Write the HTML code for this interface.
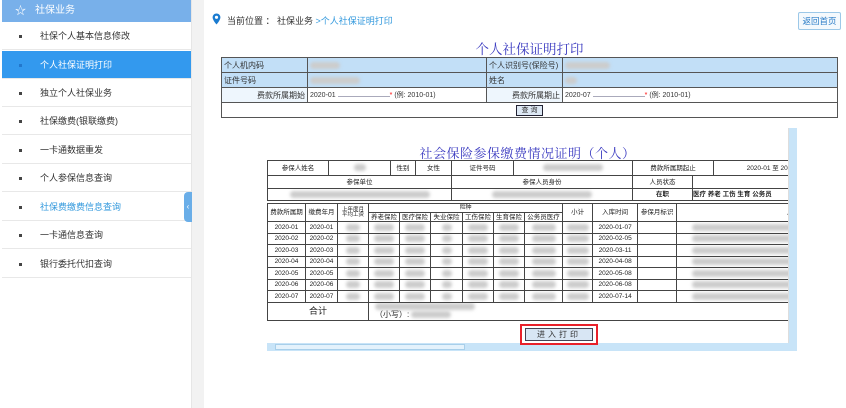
<!DOCTYPE html>
<html><head><meta charset="utf-8"><style>
*{box-sizing:border-box;margin:0;padding:0}
body{width:846px;height:408px;overflow:hidden;background:#fff;font-family:"Liberation Sans","Noto Sans CJK SC",sans-serif;font-size:9px;color:#333;position:relative}
.a{position:absolute}
.side{left:0;top:0;width:192px;height:408px;background:#fff;border-right:1px solid #e6e6e6}
.gap{left:192px;top:0;width:12px;height:408px;background:#f2f2f2}
.hd{left:2px;top:0;width:189px;height:22px;background:#78b0ea;color:#fff;font-size:10px;line-height:22px;padding-left:33px}
.it{left:2px;width:189px;height:28px;border-bottom:1px solid #e8e8e8;line-height:28px;padding-left:38px;font-size:9px;color:#333}
.it:before{content:"";position:absolute;left:17px;top:13px;width:3px;height:3px;background:#444}
.act{background:#3399ee;color:#fff}
.act:before{background:#2277cc}
table{border-collapse:collapse;table-layout:fixed;position:absolute}
td{border:1px solid #555;font-size:8px;white-space:nowrap;overflow:hidden;padding:0 2px}
.bl{display:inline-block;height:7px;background:#ccc;border-radius:4px;filter:blur(1.5px);vertical-align:middle}
.t2 td{font-size:6.5px;line-height:7px;text-align:center;border-color:#444;color:#222;padding:0}
</style></head><body>
<div class="a side"></div><div class="a gap"></div>
<div class="a hd"><span style="position:absolute;left:13px;font-size:11px">☆</span>社保业务</div>
<div class="a it" style="top:22px">社保个人基本信息修改</div>
<div class="a it act" style="top:51px">个人社保证明打印</div>
<div class="a it" style="top:79px">独立个人社保业务</div>
<div class="a it" style="top:107px">社保缴费(银联缴费)</div>
<div class="a it" style="top:136px">一卡通数据重发</div>
<div class="a it" style="top:164px">个人参保信息查询</div>
<div class="a it" style="top:193px;color:#3399dd">社保费缴费信息查询</div>
<div class="a it" style="top:221px">一卡通信息查询</div>
<div class="a it" style="top:250px">银行委托代扣查询</div>
<div class="a" style="left:184px;top:192px;width:8px;height:30px;background:#6aaee8;border-radius:4px 0 0 4px;color:#fff;font-size:8px;line-height:30px;text-align:center">‹</div>

<svg class="a" style="left:212px;top:13px" width="9" height="12" viewBox="0 0 9 12"><path d="M4.5 0.5C2.3 0.5 0.6 2.2 0.6 4.4 0.6 7.2 4.5 11.5 4.5 11.5S8.4 7.2 8.4 4.4C8.4 2.2 6.7 0.5 4.5 0.5Z" fill="#1a7bd0"/><circle cx="4.5" cy="4.3" r="1.6" fill="#fff"/></svg>
<div class="a" style="left:227px;top:14px;font-size:9px;color:#333">当前位置 ： 社保业务 <span style="color:#3399dd">&gt;个人社保证明打印</span></div>
<div class="a" style="left:798px;top:12px;width:43px;height:18px;border:1px solid #9cc8e8;border-radius:2px;background:#f4f9fd;color:#2a7cc7;font-size:8.5px;line-height:16px;text-align:center">返回首页</div>

<div class="a" style="left:221px;width:617px;top:38px;text-align:center;font-size:13.5px;color:#3838c0;font-family:'Noto Serif CJK SC',serif">个人社保证明打印</div>
<table style="left:221px;top:57px;width:617px">
<colgroup><col style="width:86px"><col style="width:179px"><col style="width:76px"><col></colgroup>
<tr style="height:15px;background:#c2dff7"><td>个人机内码</td><td><span class="bl" style="width:30px"></span></td><td>个人识别号(保险号)</td><td><span class="bl" style="width:45px"></span></td></tr>
<tr style="height:15px;background:#c2dff7"><td>证件号码</td><td><span class="bl" style="width:50px"></span></td><td>姓名</td><td><span class="bl" style="width:12px"></span></td></tr>
<tr style="height:15px"><td style="background:#eef6fd;text-align:right">费款所属期始</td><td style="font-size:7px">2020-01 <span style="display:inline-block;width:52px;border-bottom:1px solid #aab"></span><span style="color:red">*</span> (例: 2010-01)</td><td style="background:#eef6fd;text-align:right">费款所属期止</td><td style="font-size:7px">2020-07 <span style="display:inline-block;width:52px;border-bottom:1px solid #aab"></span><span style="color:red">*</span> (例: 2010-01)</td></tr>
<tr style="height:15px"><td colspan="4" style="text-align:center"><span style="display:inline-block;width:27px;height:11px;border:1px solid #223;background:#dde8f4;font-size:7px;line-height:9px;vertical-align:middle">查 询</span></td></tr>
</table>

<div class="a" style="left:267px;width:521px;top:143px;text-align:center;font-size:13px;color:#3838c0;font-family:'Noto Serif CJK SC',serif;letter-spacing:0.5px">社会保险参保缴费情况证明（个人）</div>
<div class="a" style="left:267px;top:160px;width:521px;height:161px;overflow:hidden">
<table class="t2" style="left:0;top:0;width:570px">
<colgroup><col style="width:61px"><col style="width:62px"><col style="width:25px"><col style="width:36px"><col style="width:62px"><col style="width:119px"><col style="width:81px"><col style="width:124px"></colgroup>
<tr style="height:15px"><td>参保人姓名</td><td><span class="bl" style="width:12px"></span></td><td>性别</td><td>女性</td><td>证件号码</td><td><span class="bl" style="width:60px"></span></td><td>费款所属期起止</td><td>2020-01 至 2020-07</td></tr>
</table>
<table class="t2" style="left:0;top:15px;width:570px">
<colgroup><col style="width:184px"><col style="width:181px"><col style="width:60px"><col style="width:145px"></colgroup>
<tr style="height:13px"><td>参保单位</td><td>参保人员身份</td><td>人员状态</td><td style="text-align:right">参保险种</td></tr>
<tr style="height:12px"><td><span class="bl" style="width:140px"></span></td><td><span class="bl" style="width:100px"></span></td><td style="font-weight:bold">在职</td><td style="text-align:left;font-weight:bold">医疗 养老 工伤 生育 公务员</td></tr>
</table>
<table class="t2" style="left:0;top:43px;width:550px">
<colgroup><col style="width:38px"><col style="width:32px"><col style="width:31px"><col style="width:31px"><col style="width:31px"><col style="width:32px"><col style="width:31px"><col style="width:31px"><col style="width:38px"><col style="width:30px"><col style="width:45px"><col style="width:39px"><col style="width:141px"></colgroup>
<tr style="height:9px"><td rowspan="2">费款所属期</td><td rowspan="2">缴费年月</td><td rowspan="2" style="line-height:5px;font-size:5.5px">上年度月<br>平均工资</td><td colspan="6" style="font-size:6px;line-height:6px">险种</td><td rowspan="2">小计</td><td rowspan="2">入库时间</td><td rowspan="2">参保月标识</td><td rowspan="2" style="text-align:right;padding-right:4px">用人单位</td></tr>
<tr style="height:9px"><td>养老保险</td><td>医疗保险</td><td>失业保险</td><td>工伤保险</td><td>生育保险</td><td>公务员医疗</td></tr>
<tr style="height:11.5px"><td>2020-01</td><td>2020-01</td><td><span class="bl" style="width:14px"></span></td><td><span class="bl" style="width:20px"></span></td><td><span class="bl" style="width:20px"></span></td><td><span class="bl" style="width:10px"></span></td><td><span class="bl" style="width:20px"></span></td><td><span class="bl" style="width:20px"></span></td><td><span class="bl" style="width:24px"></span></td><td><span class="bl" style="width:22px"></span></td><td>2020-01-07</td><td></td><td><span class="bl" style="width:110px"></span></td></tr>
<tr style="height:11.5px"><td>2020-02</td><td>2020-02</td><td><span class="bl" style="width:14px"></span></td><td><span class="bl" style="width:20px"></span></td><td><span class="bl" style="width:20px"></span></td><td><span class="bl" style="width:10px"></span></td><td><span class="bl" style="width:20px"></span></td><td><span class="bl" style="width:20px"></span></td><td><span class="bl" style="width:24px"></span></td><td><span class="bl" style="width:22px"></span></td><td>2020-02-05</td><td></td><td><span class="bl" style="width:110px"></span></td></tr>
<tr style="height:11.5px"><td>2020-03</td><td>2020-03</td><td><span class="bl" style="width:14px"></span></td><td><span class="bl" style="width:20px"></span></td><td><span class="bl" style="width:20px"></span></td><td><span class="bl" style="width:10px"></span></td><td><span class="bl" style="width:20px"></span></td><td><span class="bl" style="width:20px"></span></td><td><span class="bl" style="width:24px"></span></td><td><span class="bl" style="width:22px"></span></td><td>2020-03-11</td><td></td><td><span class="bl" style="width:110px"></span></td></tr>
<tr style="height:11.5px"><td>2020-04</td><td>2020-04</td><td><span class="bl" style="width:14px"></span></td><td><span class="bl" style="width:20px"></span></td><td><span class="bl" style="width:20px"></span></td><td><span class="bl" style="width:10px"></span></td><td><span class="bl" style="width:20px"></span></td><td><span class="bl" style="width:20px"></span></td><td><span class="bl" style="width:24px"></span></td><td><span class="bl" style="width:22px"></span></td><td>2020-04-08</td><td></td><td><span class="bl" style="width:110px"></span></td></tr>
<tr style="height:11.5px"><td>2020-05</td><td>2020-05</td><td><span class="bl" style="width:14px"></span></td><td><span class="bl" style="width:20px"></span></td><td><span class="bl" style="width:20px"></span></td><td><span class="bl" style="width:10px"></span></td><td><span class="bl" style="width:20px"></span></td><td><span class="bl" style="width:20px"></span></td><td><span class="bl" style="width:24px"></span></td><td><span class="bl" style="width:22px"></span></td><td>2020-05-08</td><td></td><td><span class="bl" style="width:110px"></span></td></tr>
<tr style="height:11.5px"><td>2020-06</td><td>2020-06</td><td><span class="bl" style="width:14px"></span></td><td><span class="bl" style="width:20px"></span></td><td><span class="bl" style="width:20px"></span></td><td><span class="bl" style="width:10px"></span></td><td><span class="bl" style="width:20px"></span></td><td><span class="bl" style="width:20px"></span></td><td><span class="bl" style="width:24px"></span></td><td><span class="bl" style="width:22px"></span></td><td>2020-06-08</td><td></td><td><span class="bl" style="width:110px"></span></td></tr>
<tr style="height:11.5px"><td>2020-07</td><td>2020-07</td><td><span class="bl" style="width:14px"></span></td><td><span class="bl" style="width:20px"></span></td><td><span class="bl" style="width:20px"></span></td><td><span class="bl" style="width:10px"></span></td><td><span class="bl" style="width:20px"></span></td><td><span class="bl" style="width:20px"></span></td><td><span class="bl" style="width:24px"></span></td><td><span class="bl" style="width:22px"></span></td><td>2020-07-14</td><td></td><td><span class="bl" style="width:110px"></span></td></tr>
<tr style="height:18px"><td colspan="3" style="font-size:9px;line-height:10px">合计</td><td colspan="10" style="text-align:left;font-size:8px;line-height:8px;padding-left:6px"><span class="bl" style="width:100px"></span><br>（小写）: <span class="bl" style="width:40px"></span></td></tr>
</table>
</div>
<div class="a" style="left:788px;top:128px;width:9px;height:215px;background:#c8e4f8;border-left:1px solid #ddd"></div>
<div class="a" style="left:267px;top:343px;width:530px;height:8px;background:#c8e4f8"></div>
<div class="a" style="left:275px;top:344px;width:190px;height:6px;background:#e4f2fc;border:1px solid #a8cfea"></div>
<div class="a" style="left:520px;top:324px;width:78px;height:21px;border:2px solid #e8202a"></div>
<div class="a" style="left:525px;top:328px;width:68px;height:13px;background:#d8e6f4;border:1px solid #445;font-size:8px;line-height:11px;text-align:center;letter-spacing:3px">进入打印</div>
</body></html>
